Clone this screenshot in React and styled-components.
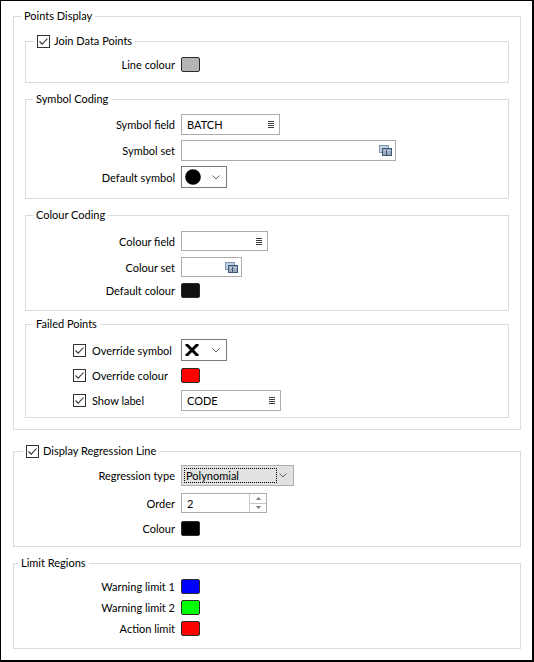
import React from "react";
import styled, { createGlobalStyle } from "styled-components";

const GlobalStyle = createGlobalStyle`
  * { box-sizing: border-box; }
  body { margin: 0; background: #fff; }
`;

function CheckBox({ checked = true }) {
  return (
    <Box>
      {checked && (
        <svg width="11" height="11" viewBox="0 0 11 11">
          <path d="M1.5 5.5 L4.2 8.2 L9.5 2.5" fill="none" stroke="#333" strokeWidth="1.1" />
        </svg>
      )}
    </Box>
  );
}

function MenuIcon() {
  return (
    <svg width="6" height="7" viewBox="0 0 6 7">
      {[0.5, 2.5, 4.5, 6.5].map((y) => (
        <line key={y} x1="0" y1={y} x2="6" y2={y} stroke="#3a3a3a" strokeWidth="1" />
      ))}
    </svg>
  );
}

function TableIcon() {
  return (
    <svg width="13" height="11" viewBox="0 0 13 11">
      <rect x="0.5" y="0.5" width="9" height="7" fill="#c6d1df" stroke="#7f95b3" />
      <rect x="3.5" y="3.5" width="9" height="7" fill="#fff" stroke="#3c5677" />
      <rect x="4" y="4" width="8" height="1.5" fill="#8aa0bd" />
      <line x1="4" y1="7" x2="12" y2="7" stroke="#3c5677" strokeWidth="1" />
      <line x1="4" y1="9" x2="12" y2="9" stroke="#3c5677" strokeWidth="1" />
      <line x1="7.5" y1="5" x2="7.5" y2="10" stroke="#3c5677" strokeWidth="1" />
    </svg>
  );
}

function Chevron() {
  return (
    <svg width="8" height="5" viewBox="0 0 8 5">
      <path d="M0.5 0.5 L4 4 L7.5 0.5" fill="none" stroke="#606060" strokeWidth="1" />
    </svg>
  );
}

function Cross() {
  return (
    <svg width="14" height="12" viewBox="0 0 14 12">
      <path d="M2 1 L12 11 M12 1 L2 11" stroke="#000" strokeWidth="3" strokeLinecap="square" />
    </svg>
  );
}

function Dot() {
  return (
    <svg width="16" height="16" viewBox="0 0 16 16">
      <circle cx="8" cy="8" r="7.8" fill="#000" />
    </svg>
  );
}

function SpinArrow({ up }) {
  return (
    <svg width="5" height="3" viewBox="0 0 5 3">
      <path d={up ? "M0 3 L2.5 0 L5 3 Z" : "M0 0 L2.5 3 L5 0 Z"} fill="#7a7a7a" />
    </svg>
  );
}

export default function App() {
  return (
    <>
      <GlobalStyle />
      <Window>
        <Group>
          <Legend $ml={7}>Points Display</Legend>
          <Body $p="9px 11px 11px 11px">
            <Group>
              <Legend $ml={8}>
                <CheckBox />
                Join Data Points
              </Legend>
              <Body $p="8px 0 10px 0">
                <Row $labelW={149} $h={15}>
                  <Label>Line colour</Label>
                  <Swatch $c="#b4b4b4" />
                </Row>
              </Body>
            </Group>

            <Group $mt={8}>
              <Legend $ml={7}>Symbol Coding</Legend>
              <Body $p="7px 0 10px 0" $gap={5}>
                <Row $labelW={149} $h={21}>
                  <Label>Symbol field</Label>
                  <Field $w={99} $pr={5}>
                    <FieldText>BATCH</FieldText>
                    <MenuIcon />
                  </Field>
                </Row>
                <Row $labelW={149} $h={21}>
                  <Label>Symbol set</Label>
                  <Field $w={215} $pr={3}>
                    <FieldText />
                    <TableIcon />
                  </Field>
                </Row>
                <Row $labelW={149} $h={22}>
                  <Label>Default symbol</Label>
                  <Combo>
                    <Dot />
                    <Chevron />
                  </Combo>
                </Row>
              </Body>
            </Group>

            <Group $mt={8}>
              <Legend $ml={7}>Colour Coding</Legend>
              <Body $p="8px 0 12px 0" $gap={6}>
                <Row $labelW={149} $h={20}>
                  <Label>Colour field</Label>
                  <Field $w={87} $pr={5}>
                    <FieldText />
                    <MenuIcon />
                  </Field>
                </Row>
                <Row $labelW={149} $h={20}>
                  <Label>Colour set</Label>
                  <Field $w={61} $pr={3}>
                    <FieldText />
                    <TableIcon />
                  </Field>
                </Row>
                <Row $labelW={149} $h={15}>
                  <Label>Default colour</Label>
                  <Swatch $c="#111" />
                </Row>
              </Body>
            </Group>

            <Group $mt={5}>
              <Legend $ml={7}>Failed Points</Legend>
              <Body $p="7px 0 6px 0" $gap={7}>
                <Row $labelW={149} $h={22}>
                  <CheckLabel>
                    <CheckBox />
                    Override symbol
                  </CheckLabel>
                  <Combo>
                    <Cross />
                    <Chevron />
                  </Combo>
                </Row>
                <Row $labelW={149} $h={15}>
                  <CheckLabel>
                    <CheckBox />
                    Override colour
                  </CheckLabel>
                  <Swatch $c="#ff0000" />
                </Row>
                <Row $labelW={149} $h={21}>
                  <CheckLabel>
                    <CheckBox />
                    Show label
                  </CheckLabel>
                  <Field $w={100} $pr={5}>
                    <FieldText>CODE</FieldText>
                    <MenuIcon />
                  </Field>
                </Row>
              </Body>
            </Group>
          </Body>
        </Group>

        <Group $mt={13}>
          <Legend $ml={9}>
            <CheckBox />
            Display Regression Line
          </Legend>
          <Body $p="6px 0 9px 0" $gap={7}>
            <Row $labelW={161} $h={21}>
              <Label>Regression type</Label>
              <Select>
                <FocusBox>Polynomial</FocusBox>
                <Chevron />
              </Select>
            </Row>
            <Row $labelW={161} $h={20}>
              <Label>Order</Label>
              <Spin>
                <FieldText>2</FieldText>
                <SpinButtons>
                  <SpinHalf>
                    <SpinArrow up />
                  </SpinHalf>
                  <SpinHalf $bottom>
                    <SpinArrow />
                  </SpinHalf>
                </SpinButtons>
              </Spin>
            </Row>
            <Row $labelW={161} $h={17}>
              <Label>Colour</Label>
              <Swatch $c="#000" />
            </Row>
          </Body>
        </Group>

        <Group $mt={8}>
          <Legend $ml={4}>Limit Regions</Legend>
          <Body $p="8px 0 12px 0" $gap={6}>
            <Row $labelW={161} $h={15}>
              <Label>Warning limit 1</Label>
              <Swatch $c="#0000ff" />
            </Row>
            <Row $labelW={161} $h={15}>
              <Label>Warning limit 2</Label>
              <Swatch $c="#00ff00" />
            </Row>
            <Row $labelW={161} $h={15}>
              <Label>Action limit</Label>
              <Swatch $c="#ff0000" />
            </Row>
          </Body>
        </Group>
      </Window>
    </>
  );
}

const Window = styled.div`
  width: 534px;
  height: 662px;
  display: flex;
  flex-direction: column;
  padding: 7px 11px 0 12px;
  background: #fff;
  border: 1px solid #000;
  border-right-width: 2px;
  border-bottom-width: 2px;
  font-family: Lato, "Liberation Sans", sans-serif;
  font-size: 11px;
  color: #000;
`;
const Group = styled.fieldset`
  margin: ${(p) => p.$mt || 0}px 0 0 0;
  padding: 0;
  min-width: 0;
  border: 1px solid #dcdcdc;
`;
const Legend = styled.legend`
  margin-left: ${(p) => p.$ml}px;
  padding: 0 3px;
  height: 16px;
  line-height: 16px;
  display: flex;
  align-items: center;
  gap: 4px;
  white-space: nowrap;
`;
const Body = styled.div`
  padding: ${(p) => p.$p};
  display: flex;
  flex-direction: column;
  gap: ${(p) => p.$gap || 0}px;
`;
const Row = styled.div`
  height: ${(p) => p.$h}px;
  display: grid;
  grid-template-columns: ${(p) => p.$labelW}px auto;
  column-gap: 6px;
  align-items: center;
  justify-items: start;
`;
const Label = styled.span`
  justify-self: stretch;
  text-align: right;
  white-space: nowrap;
`;
const CheckLabel = styled.span`
  display: flex;
  align-items: center;
  gap: 6px;
  padding-left: 47px;
  white-space: nowrap;
`;
const Box = styled.span`
  width: 13px;
  height: 13px;
  flex: none;
  display: inline-flex;
  align-items: center;
  justify-content: center;
  border: 1px solid #333;
  background: #fff;
`;
const Swatch = styled.span`
  width: 19px;
  height: 15px;
  border: 1px solid #2a2a2a;
  border-radius: 2px;
  background: ${(p) => p.$c};
`;
const Field = styled.div`
  width: ${(p) => p.$w}px;
  height: 100%;
  display: flex;
  align-items: center;
  justify-content: space-between;
  padding: 0 ${(p) => p.$pr}px 0 5px;
  border: 1px solid #acacac;
  background: #fff;
`;
const FieldText = styled.span`
  white-space: nowrap;
`;
const Combo = styled.div`
  width: 46px;
  height: 100%;
  display: flex;
  align-items: center;
  justify-content: space-between;
  padding: 0 6px 0 3px;
  border: 1px solid #7a7a7a;
  background: #fff;
`;
const Select = styled.div`
  width: 113px;
  height: 100%;
  display: flex;
  align-items: center;
  padding: 2px 6px 2px 2px;
  border: 1px solid #adadad;
  background: #e1e1e1;
  justify-content: space-between;
`;
const FocusBox = styled.span`
  width: 93px;
  height: 100%;
  display: flex;
  align-items: center;
  padding-left: 1px;
  border: 1px dotted #000;
`;
const Spin = styled.div`
  width: 86px;
  height: 100%;
  display: flex;
  align-items: center;
  justify-content: space-between;
  padding-left: 5px;
  border: 1px solid #acacac;
  background: #fff;
`;
const SpinButtons = styled.div`
  width: 17px;
  height: 100%;
  display: flex;
  flex-direction: column;
  border-left: 1px solid #c8c8c8;
`;
const SpinHalf = styled.div`
  flex: 1;
  display: flex;
  align-items: center;
  justify-content: center;
  border-top: ${(p) => (p.$bottom ? "1px solid #c8c8c8" : "none")};
`;
